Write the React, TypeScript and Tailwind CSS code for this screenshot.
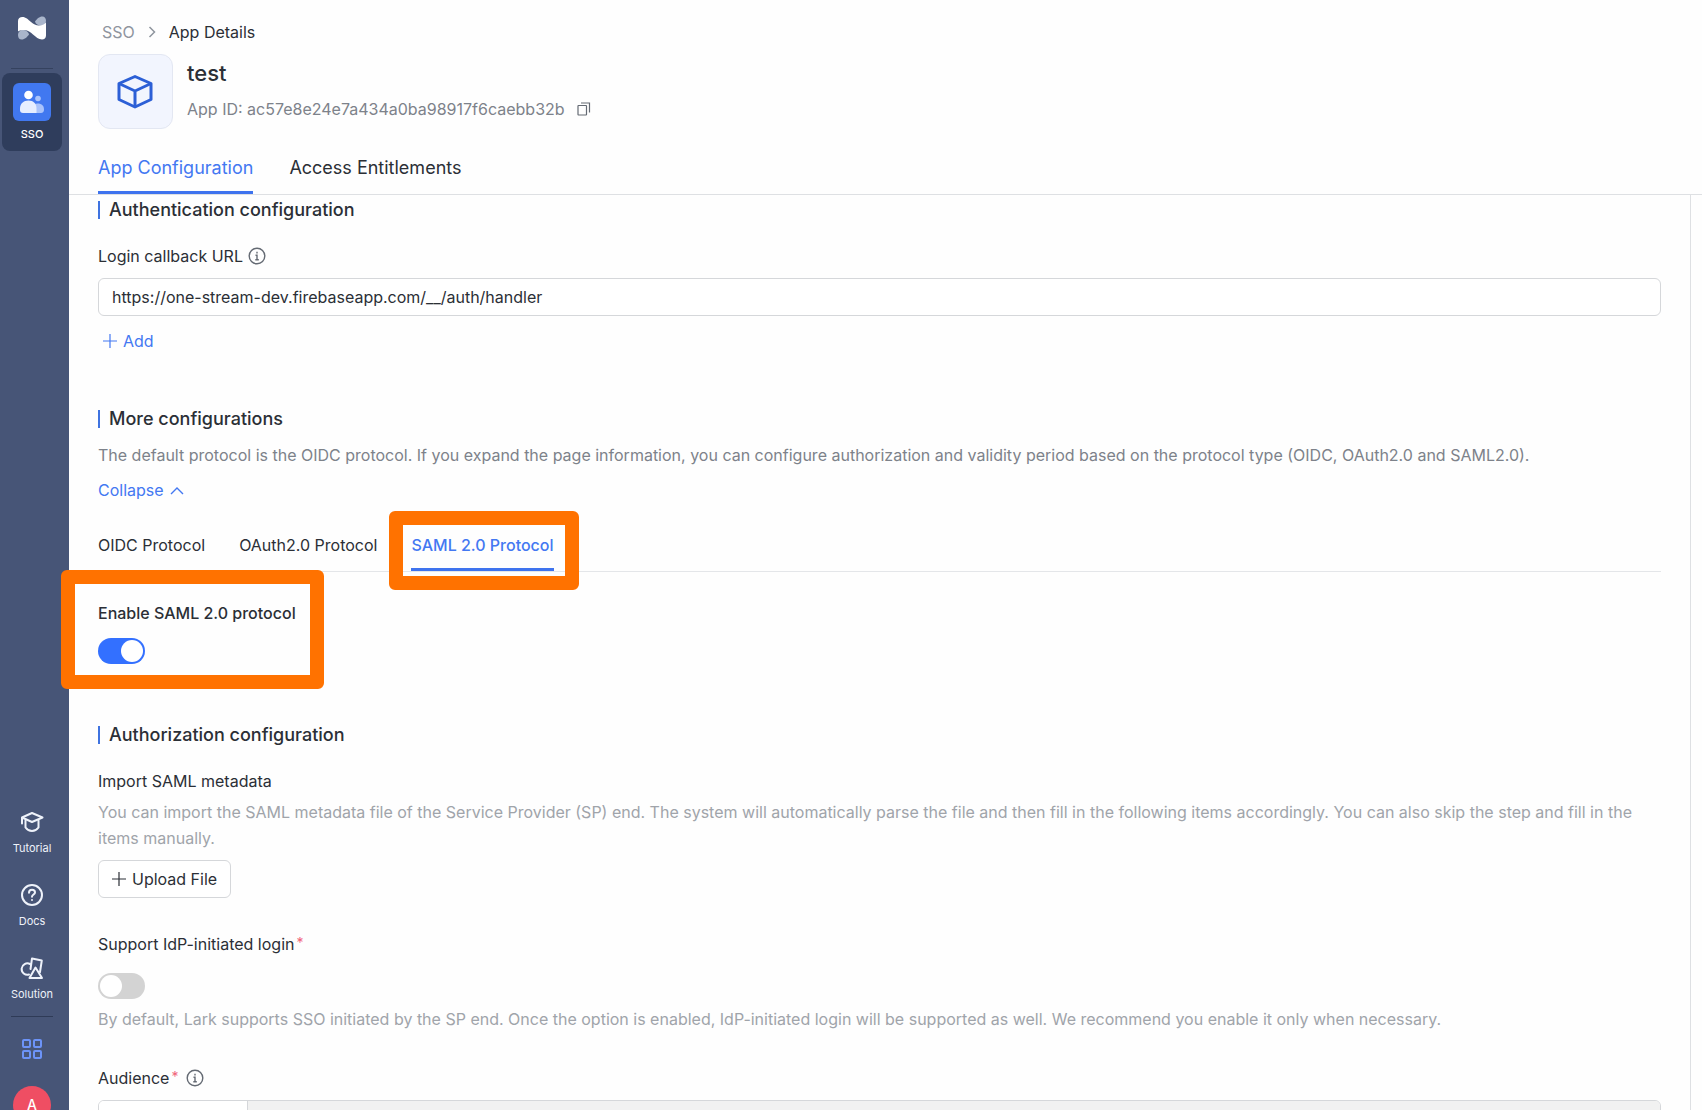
import React, { useState } from "react";

const protocolTabs = ["OIDC Protocol", "OAuth2.0 Protocol", "SAML 2.0 Protocol"];

const LogoIcon = () => (
  <svg width="30" height="24" viewBox="0 0 30 24" fill="none">
    <path
      d="M1 19c0-3 2.200-5 5-5 2.800 0 5.500 2 6 4.500C10 21 8 23.500 4.500 23.500 2.500 23.500 1 22 1 19Z"
      fill="#a9b5cb"
    />
    <path
      d="M29 5c0 3-2.200 4.500-5 4.500-2.800 0-5.500-1.500-6-4C20 3 22 .500 25.500.500 27.500.500 29 2 29 5Z"
      fill="#a9b5cb"
    />
    <path
      d="M1 15.500V5C1 2.200 3 1 5.300 1 9 1 11 3.500 14 6c2.700 2.300 4.800 3.500 8 3.500 3 0 5.300-1 7-3v13c0 2.500-1.700 4-4 4-3.500 0-6-2.500-9-5-2.700-2.300-5-4.500-8.500-4.500-2.600 0-4.800.3-6.500 1.500Z"
      fill="#fff"
    />
  </svg>
);

const PeopleIcon = () => (
  <svg width="38" height="38" viewBox="0 0 38 38">
    <rect width="38" height="38" rx="6" fill="#4178f0" />
    <circle cx="25" cy="15.500" r="2.800" fill="#a9c3fb" />
    <path
      d="M17 30c0-6 3-9.500 7.500-9.500S31 23 31 26.500c0 2-1 3.500-3 3.500Z"
      fill="#a9c3fb"
    />
    <circle cx="15.500" cy="12" r="4.300" fill="#fff" />
    <path
      d="M7 25.500c0-5 3.500-8 8.500-8s8 3 8 8V30H10c-2 0-3-1-3-3Z"
      fill="#e6eeff"
    />
  </svg>
);

const TutorialIcon = () => (
  <svg width="24" height="24" viewBox="0 0 24 24" fill="none" stroke="#eef2fa" strokeWidth="2" strokeLinejoin="round" strokeLinecap="round">
    <path d="M12 3 22.500 7.500 12 12 2 7.500Z" />
    <path d="M5.500 10.500v7c1.700 2.300 4 3.500 6.500 3.500s4.800-1.200 6.500-3.500v-7" />
    <path d="M2 8v5.500" />
  </svg>
);

const DocsIcon = () => (
  <svg width="24" height="24" viewBox="0 0 24 24" fill="none" stroke="#eef2fa" strokeWidth="2" strokeLinecap="round">
    <circle cx="12" cy="12" r="10" />
    <path d="M9 9.700c0-1.800 1.300-3 3-3s3 1.100 3 2.700c0 2-3 2.200-3 4.400" />
    <path d="M12 17v.1" />
  </svg>
);

const SolutionIcon = () => (
  <svg width="24" height="24" viewBox="0 0 24 24" fill="none" stroke="#eef2fa" strokeWidth="2" strokeLinejoin="round" strokeLinecap="round">
    <path d="M9 18.500A5.700 5.700 0 1 1 10 8" />
    <path d="M10.500 13 12 2.500l9.800 2L20 16" />
    <path d="M15.500 11.500 22 22H9.500Z" />
  </svg>
);

const GridIcon = () => (
  <svg width="22" height="22" viewBox="0 0 22 22" fill="none" stroke="#6c93f8" strokeWidth="2">
    <rect x="2" y="2" width="7" height="7" rx="1" />
    <rect x="13" y="2" width="7" height="7" rx="1" />
    <rect x="2" y="13" width="7" height="7" rx="1" />
    <rect x="13" y="13" width="7" height="7" rx="1" />
  </svg>
);

const CubeIcon = () => (
  <svg width="38" height="36" viewBox="0 0 38 36" fill="none" stroke="#2c5fd6" strokeWidth="3" strokeLinejoin="round">
    <path d="M18 2.500 34 9.500v16l-16 7.500L2 25.500v-16Z" />
    <path d="M2 9.500 18 17l16-7.500M18 17v16" />
  </svg>
);

const InfoIcon = () => (
  <svg width="18" height="18" viewBox="0 0 18 18" fill="none" stroke="#646a73" strokeWidth="1.400">
    <circle cx="9" cy="9" r="7.800" />
    <path d="M9 4.800v1.600M7.500 8.300H9v4.500M7.300 12.800h3.500" />
  </svg>
);

const PlusIcon = () => (
  <svg width="14" height="14" viewBox="0 0 14 14" fill="none" stroke="currentColor" strokeWidth="1.200">
    <path d="M7 0v14M0 7h14" />
  </svg>
);

const CopyIcon = () => (
  <svg width="14" height="14" viewBox="0 0 14 14" fill="none" stroke="#646a73" strokeWidth="1.200">
    <rect x="1" y="3.500" width="8.500" height="9.500" rx=".5" />
    <path d="M4 1h8.500v9.500" />
  </svg>
);

const SectionTitle = ({ children }: { children: React.ReactNode }) => (
  <h2 className="flex items-center gap-[9px] text-[18px] leading-6 font-medium text-[#2b2f36]">
    <span className="w-0.5 h-[18px] bg-[#3f73e0]" />
    {children}
  </h2>
);

const NavItem = ({ label, icon }: { label: string; icon: React.ReactNode }) => (
  <a href="#" className="flex flex-col items-center gap-1.5 h-[73px] text-[11px] leading-4 text-[#eef2fa]">
    {icon}
    {label}
  </a>
);

const Toggle = ({ id, checked, onChange }: { id: string; checked: boolean; onChange: () => void }) => (
  <input
    id={id}
    type="checkbox"
    role="switch"
    checked={checked}
    onChange={onChange}
    className="block appearance-none w-[47px] h-[26px] p-0.5 rounded-full bg-[#d3d3d3] checked:bg-[#3370ff] before:block before:size-[22px] before:rounded-full before:bg-white checked:before:ml-[21px]"
  />
);

export default function App() {
  const [activeTab, setActiveTab] = useState("SAML 2.0 Protocol");
  const [samlEnabled, setSamlEnabled] = useState(true);
  const [idpLogin, setIdpLogin] = useState(false);
  const [callbackUrl, setCallbackUrl] = useState(
    "https://one-stream-dev.firebaseapp.com/__/auth/handler"
  );

  return (
    <div className="flex h-screen overflow-hidden bg-[#fefefe] font-['Inter','Liberation_Sans',sans-serif] text-[16px] leading-[26px] text-[#2b2f36]">
      {/* Sidebar */}
      <nav className="flex flex-col items-center shrink-0 w-[69px] pr-[5px] pt-4 bg-[#475577]">
        <LogoIcon />
        <div className="w-[42px] h-px mt-7 bg-[#35425f]" />
        <a
          href="#"
          className="flex flex-col items-center w-[60px] h-[78px] mt-1 pt-[10px] gap-1 rounded-lg bg-[#2f3d5c] text-[11px] leading-[18px] font-medium text-white"
        >
          <PeopleIcon />
          SSO
        </a>
        <div className="mt-auto">
          <NavItem label="Tutorial" icon={<TutorialIcon />} />
          <NavItem label="Docs" icon={<DocsIcon />} />
          <NavItem label="Solution" icon={<SolutionIcon />} />
        </div>
        <div className="w-[42px] h-px -mt-[13px] bg-[#2f3b57]" />
        <button className="mt-[21px]" aria-label="Apps">
          <GridIcon />
        </button>
        <button className="shrink-0 size-[38px] mt-[26px] -mb-[14px] rounded-full bg-[#ef4e63] text-[14px] font-medium text-white">
          A
        </button>
      </nav>

      <div className="flex flex-col flex-1 min-w-0">
        {/* Header */}
        <header className="pl-[29px] pt-5 border-b border-[#dee0e3]">
          <div className="flex items-center gap-[13px] pl-1 leading-6">
            <a href="#" className="text-[#8f959e]">SSO</a>
            <svg width="8" height="12" viewBox="0 0 8 12" fill="none" stroke="#8f959e" strokeWidth="1.500">
              <path d="m1.500 1 5 5-5 5" />
            </svg>
            <span>App Details</span>
          </div>
          <div className="flex gap-[14px] mt-[10px]">
            <div className="flex items-center justify-center size-[75px] rounded-xl border border-[#e3e7f2] bg-[#f2f5fe]">
              <CubeIcon />
            </div>
            <div className="pt-1">
              <h1 className="text-[22px] leading-[30px] font-medium">test</h1>
              <div className="flex items-center gap-3 mt-2 text-[#7d828a]">
                App ID: ac57e8e24e7a434a0ba98917f6caebb32b
                <button aria-label="Copy">
                  <CopyIcon />
                </button>
              </div>
            </div>
          </div>
          <div className="flex gap-9 mt-[25px] text-[18px] leading-[26px]">
            <button className="h-10 pb-[9px] border-b-[3px] border-[#3e73ee] text-[#4378f2]">
              App Configuration
            </button>
            <button className="h-10 pb-3">Access Entitlements</button>
          </div>
        </header>

        <div className="flex flex-1 min-h-0">
          <main className="flex-1 min-w-0 px-[29px] pt-[3px] border-r border-[#dee0e3]">
            <SectionTitle>Authentication configuration</SectionTitle>
            <div className="flex items-center gap-[5px] mt-[21px]">
              <label htmlFor="callback">Login callback URL</label>
              <InfoIcon />
            </div>
            <input
              id="callback"
              value={callbackUrl}
              onChange={(e) => setCallbackUrl(e.target.value)}
              className="block w-full h-[38px] mt-[9px] px-[13px] rounded-md border border-[#d5d7da] bg-white"
            />
            <button className="flex items-center gap-1.5 mt-3 ml-[5px] text-[#4378f2]">
              <PlusIcon />
              Add
            </button>

            <div className="mt-[53px]">
              <SectionTitle>More configurations</SectionTitle>
            </div>
            <p className="mt-[11px] text-[#7d828a]">
              The default protocol is the OIDC protocol. If you expand the page information, you can
              configure authorization and validity period based on the protocol type (OIDC, OAuth2.0 and
              SAML2.0).
            </p>
            <button className="flex items-center gap-1.5 mt-[9px] text-[#4378f2]">
              Collapse
              <svg width="14" height="9" viewBox="0 0 14 9" fill="none" stroke="currentColor" strokeWidth="1.400">
                <path d="m1 8 6-6 6 6" />
              </svg>
            </button>

            {/* Protocol tabs */}
            <div className="flex gap-[34px] mt-7 border-b border-[#e4e6e9]">
              {protocolTabs.map((tab) => (
                <button
                  key={tab}
                  onClick={() => setActiveTab(tab)}
                  className={`relative h-10 pb-[10px] border-b-[3px] ${
                    tab === activeTab
                      ? "border-[#3e73ee] text-[#4378f2] font-medium"
                      : "border-transparent"
                  }`}
                >
                  {tab}
                  {tab === activeTab && (
                    <span className="absolute -left-[22px] -right-[25px] -top-5 h-[79px] border-[14px] border-[#ff7200] rounded-md" />
                  )}
                </button>
              ))}
            </div>

            <div className="relative w-fit mt-7">
              <label htmlFor="saml" className="block font-medium">
                Enable SAML 2.0 protocol
              </label>
              <div className="mt-3">
                <Toggle id="saml" checked={samlEnabled} onChange={() => setSamlEnabled(!samlEnabled)} />
              </div>
              <span className="absolute -left-[37px] -right-[28px] -top-[30px] -bottom-[25px] border-[14px] border-[#ff7200] rounded-md pointer-events-none" />
            </div>

            <div className="mt-[59px]">
              <SectionTitle>Authorization configuration</SectionTitle>
            </div>
            <h3 className="mt-[21px]">Import SAML metadata</h3>
            <p className="mt-[5px] text-[#a0a4aa]">
              You can import the SAML metadata file of the Service Provider (SP) end. The system will
              automatically parse the file and then fill in the following items accordingly. You can also
              skip the step and fill in the items manually.
            </p>
            <button className="flex items-center gap-1.5 h-[38px] mt-[9px] px-[13px] rounded-md border border-[#d5d7da] bg-white">
              <PlusIcon />
              Upload File
            </button>

            <label htmlFor="idp" className="flex gap-0.5 w-fit mt-[33px]">
              Support IdP-initiated login
              <span className="leading-6 text-[14px] text-[#f0647a]">*</span>
            </label>
            <div className="mt-4">
              <Toggle id="idp" checked={idpLogin} onChange={() => setIdpLogin(!idpLogin)} />
            </div>
            <p className="mt-[7px] text-[#a0a4aa]">
              By default, Lark supports SSO initiated by the SP end. Once the option is enabled,
              IdP-initiated login will be supported as well. We recommend you enable it only when
              necessary.
            </p>

            <div className="flex items-center gap-2 mt-[33px]">
              <label htmlFor="audience" className="flex gap-0.5">
                Audience
                <span className="leading-6 text-[14px] text-[#f0647a]">*</span>
              </label>
              <InfoIcon />
            </div>
            <div className="flex h-[38px] mt-[9px] rounded-md border border-[#d5d7da] overflow-hidden">
              <div className="w-[149px] border-r border-[#d5d7da] bg-white" />
              <input id="audience" disabled className="flex-1 px-[13px] bg-[#f1f1f1]" />
            </div>
          </main>
          <div className="w-[11px]" />
        </div>
      </div>
    </div>
  );
}
